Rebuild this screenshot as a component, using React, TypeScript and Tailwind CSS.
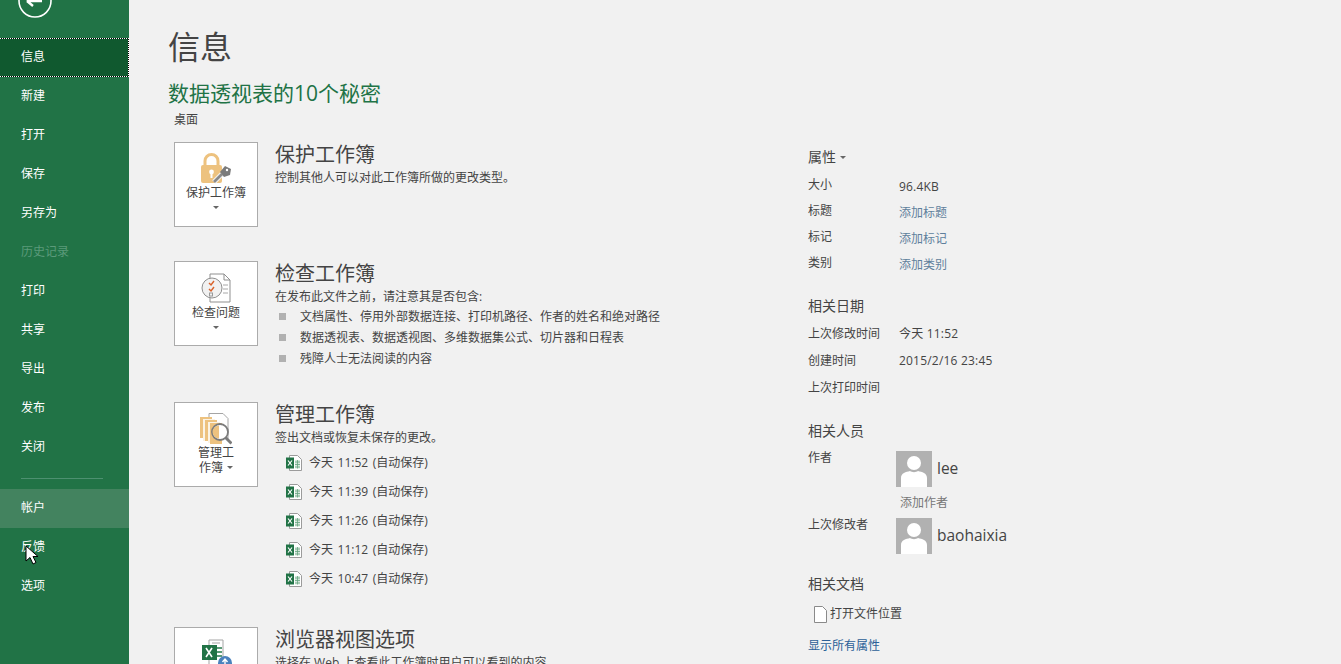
import React from "react";

const navTop = ["新建", "打开", "保存", "另存为", "历史记录", "打印", "共享", "导出", "发布", "关闭"];

const Caret = ({ className = "" }: { className?: string }) => (
  <svg width="6" height="3" viewBox="0 0 6 3" className={className}>
    <path d="M0 0h6L3 3z" fill="#666" />
  </svg>
);

const LockIcon = () => (
  <svg width="32" height="32" viewBox="0 0 32 32">
    <path d="M5 13V8a6.500 6.500 0 0 1 13 0V13" fill="none" stroke="#edc27f" strokeWidth="3" />
    <rect x="1" y="12" width="21" height="18" rx="2" fill="#edc27f" />
    <circle cx="11.500" cy="19" r="2.400" fill="#fff" />
    <rect x="10.500" y="20" width="2" height="5" fill="#fff" />
    <path d="M14 29l8-8" stroke="#f1f1f1" strokeWidth="5" />
    <path d="M14 29l8-8" stroke="#8a8a8a" strokeWidth="2.600" />
    <path d="M20 19l5-6 6 3-1 6-6 2z" fill="#7b7b7b" />
    <circle cx="27" cy="17" r="1.200" fill="#fff" />
  </svg>
);

const InspectIcon = () => (
  <svg width="32" height="30" viewBox="0 0 32 30">
    <path d="M10 1h14l6 6v22H10z" fill="#fff" stroke="#8f8f8f" />
    <path d="M24 1v6h6" fill="none" stroke="#8f8f8f" />
    <path d="M23 12h5M23 16h5M23 20h5" stroke="#a8a8a8" />
    <circle cx="12" cy="15" r="10" fill="#f1f1f1" stroke="#8f8f8f" />
    <path d="M9 10l2 2 3-4M9 16l2 2 3-4" fill="none" stroke="#d9622b" strokeWidth="1.400" />
    <rect x="9.500" y="20" width="3" height="3" fill="none" stroke="#999" />
  </svg>
);

const ManageIcon = () => (
  <svg width="32" height="32" viewBox="0 0 32 32">
    <path d="M9 .5h14l5 5v20H9z" fill="#fff" stroke="#a5a5a5" />
    <rect x="0" y="4" width="12" height="21" fill="#edc27f" />
    <rect x="3" y="6" width="12" height="22" fill="#fbf3e4" />
    <rect x="5" y="7" width="12" height="21" fill="#edc27f" />
    <rect x="8" y="9" width="12" height="21" fill="#fbf3e4" />
    <rect x="10" y="10" width="12" height="21" fill="#edc27f" />
    <circle cx="20" cy="19" r="8" fill="#fff" stroke="#7b7b7b" strokeWidth="1.800" />
    <path d="M19 12.500a6.500 6.500 0 0 0 0 13z" fill="#edc27f" />
    <path d="M25.500 24.500l6 6" stroke="#7b7b7b" strokeWidth="3" />
  </svg>
);

const BrowserIcon = () => (
  <svg width="34" height="32" viewBox="0 0 34 32">
    <path d="M10 2h14v27H10z" fill="#fff" stroke="#a5a5a5" />
    <path d="M13 5h8" stroke="#a5a5a5" />
    <rect x="3" y="7" width="15" height="15" fill="#217346" />
    <path d="M7 10l6 9M13 10l-6 9" stroke="#fff" strokeWidth="1.600" />
    <path d="M18 10h5M18 14h5M18 18h5" stroke="#5a9a76" strokeWidth="2" />
    <circle cx="26" cy="25" r="7" fill="#4a82bd" />
    <path d="M26 21v8M23.500 24l2.500-3 2.500 3" fill="none" stroke="#fff" strokeWidth="1.400" />
  </svg>
);

const ExcelFile = () => (
  <svg width="16" height="16" viewBox="0 0 16 16" className="shrink-0">
    <path d="M3.500 .5h8l4 4v11h-12z" fill="#fff" stroke="#9b9b9b" />
    <path d="M9 5h5v8.500H9z" fill="#d7e8dd" />
    <path d="M9 7h5M9 9.500h5M9 12h5M11.500 5v8.500" stroke="#67a582" strokeWidth=".8" />
    <rect x="0" y="2.500" width="8" height="11" fill="#217346" />
    <path d="M2 5.500l4 5M6 5.500l-4 5" stroke="#fff" strokeWidth="1.200" />
  </svg>
);

const Avatar = () => (
  <svg width="36" height="36" viewBox="0 0 36 36" className="shrink-0">
    <rect width="36" height="36" fill="#b1b1b1" />
    <circle cx="18" cy="12" r="7" fill="#fff" />
    <path d="M5 36V27c0-5 5-6 9-7 2 1.500 6 1.500 8 0 4 1 9 2 9 7v9z" fill="#fff" />
  </svg>
);

const BigButton = ({ icon, children }: { icon: React.ReactNode; children: React.ReactNode }) => (
  <div className="w-[84px] h-[85px] shrink-0 bg-white border border-[#ababab] flex flex-col items-center pt-[10px] text-[12px] leading-[15px] text-[#444]">
    <div className="h-[32px] flex items-center">{icon}</div>
    {children}
  </div>
);

const Prop = ({ label, value, link, nudge, h = "h-[26px]" }: { label: string; value?: string; link?: boolean; nudge?: boolean; h?: string }) => (
  <div className={`flex items-center text-[12px] ${h}`}>
    <span className="w-[91px] text-[#444]">{label}</span>
    {value && <span className={`${nudge ? "pt-[3px]" : ""} ${link ? "text-[#5f7f9c]" : "text-[#444] tracking-[0.2px]"}`}>{value}</span>}
  </div>
);

const App = () => {
  return (
    <div
      className="relative w-[1341px] h-[664px] overflow-hidden flex bg-[#f1f1f1] text-[#444]"
      style={{ fontFamily: '"Open Sans", "Noto Sans CJK SC", sans-serif' }}
    >
      {/* Sidebar */}
      <aside className="w-[129px] h-full shrink-0 bg-[#217346] text-white text-[12px]">
        <div className="h-[38px] relative overflow-hidden">
          <svg width="34" height="18" viewBox="0 0 34 18" className="absolute left-[18px] top-0">
            <circle cx="17" cy="1" r="16" fill="none" stroke="#fff" strokeWidth="1.600" />
            <path d="M9 1l6-5M9 1h15M9 1l6 5" fill="none" stroke="#fff" strokeWidth="2.400" />
          </svg>
        </div>
        <div className="h-[39px] bg-black border-y border-r border-dotted border-white">
          <div className="h-full bg-[#10592f] flex items-center pl-[21px] pb-[2px]">信息</div>
        </div>
        {navTop.map((item) => (
          <div
            key={item}
            className={`h-[39px] flex items-center pl-[21px] pb-[2px] ${item === "历史记录" ? "text-[#5b9a7a]" : ""}`}
          >
            {item}
          </div>
        ))}
        <div className="mx-[21px] mt-[11px] mb-[10px] h-px bg-[#4d9070] w-[82px]" />
        <div className="h-[39px] bg-[#43835f] flex items-center pl-[21px] pb-[2px]">帐户</div>
        <div className="h-[39px] flex items-center pl-[21px] pb-[2px]">反馈</div>
        <div className="h-[39px] flex items-center pl-[21px] pb-[2px]">选项</div>
      </aside>

      {/* Main */}
      <main className="flex-1 pl-[40px] min-w-0">
        <h1 className="text-[32px] leading-[44px] mt-[25px] -ml-[1px] text-[#444]">信息</h1>
        <h2 className="text-[21px] leading-[30px] mt-[9px] -ml-[1px] text-[#217346]">数据透视表的10个秘密</h2>
        <p className="text-[12px] leading-[16px] ml-[5px] mt-[4px] text-[#444]">桌面</p>

        <div className="flex mt-[14px]">
          <div className="w-[639px] shrink-0 pl-[5px]">
            {/* protect */}
            <section className="flex h-[119px]">
              <BigButton icon={<LockIcon />}>
                <span>保护工作簿</span>
                <Caret className="mt-[6px]" />
              </BigButton>
              <div className="pl-[17px]">
                <h3 className="text-[20px] leading-[26px] text-[#444]">保护工作簿</h3>
                <p className="text-[12px] leading-[16px] mt-[2px]">控制其他人可以对此工作簿所做的更改类型。</p>
              </div>
            </section>

            {/* inspect */}
            <section className="flex h-[141px]">
              <BigButton icon={<InspectIcon />}>
                <span className="mt-[1px]">检查问题</span>
                <Caret className="mt-[6px]" />
              </BigButton>
              <div className="pl-[17px]">
                <h3 className="text-[20px] leading-[26px] text-[#444]">检查工作簿</h3>
                <p className="text-[12px] leading-[16px] mt-[2px]">在发布此文件之前，请注意其是否包含:</p>
                <ul className="text-[12px] mt-[1px]">
                  {["文档属性、停用外部数据连接、打印机路径、作者的姓名和绝对路径", "数据透视表、数据透视图、多维数据集公式、切片器和日程表", "残障人士无法阅读的内容"].map((t) => (
                    <li key={t} className="flex items-center h-[21px] pl-[4px]">
                      <span className="w-[7px] h-[7px] bg-[#b1b1b1] mr-[14px]" />
                      {t}
                    </li>
                  ))}
                </ul>
              </div>
            </section>

            {/* manage */}
            <section className="flex h-[225px]">
              <BigButton icon={<ManageIcon />}>
                <span>管理工</span>
                <span className="flex items-center gap-[4px]">作簿<Caret /></span>
              </BigButton>
              <div className="pl-[17px]">
                <h3 className="text-[20px] leading-[26px] text-[#444]">管理工作簿</h3>
                <p className="text-[12px] leading-[16px] mt-[2px]">签出文档或恢复未保存的更改。</p>
                <div className="mt-[2px]">
                  {["今天 11:52 (自动保存)", "今天 11:39 (自动保存)", "今天 11:26 (自动保存)", "今天 11:12 (自动保存)", "今天 10:47 (自动保存)"].map((t) => (
                    <div key={t} className="flex items-center h-[29px] pl-[11px] gap-[7px] text-[12px] [word-spacing:1.5px]">
                      <ExcelFile />
                      {t}
                    </div>
                  ))}
                </div>
              </div>
            </section>

            {/* browser view */}
            <section className="flex">
              <BigButton icon={<BrowserIcon />}>
                <span />
              </BigButton>
              <div className="pl-[17px]">
                <h3 className="text-[20px] leading-[26px] text-[#444]">浏览器视图选项</h3>
                <p className="text-[12px] leading-[16px] mt-[2px]">选择在 Web 上查看此工作簿时用户可以看到的内容。</p>
              </div>
            </section>
          </div>

          {/* Properties */}
          <div className="w-[300px] shrink-0">
            <div className="flex items-center gap-[4px] text-[14px] leading-[20px] mt-[5px] mb-[5px] text-[#444]">属性<Caret /></div>
            <Prop label="大小" value="96.4KB" nudge />
            <Prop label="标题" value="添加标题" link nudge />
            <Prop label="标记" value="添加标记" link nudge />
            <Prop label="类别" value="添加类别" link nudge />

            <div className="text-[14px] leading-[20px] mt-[20px] mb-[4px]">相关日期</div>
            <Prop label="上次修改时间" value="今天 11:52" h="h-[27px]" />
            <Prop label="创建时间" value="2015/2/16 23:45" h="h-[27px]" />
            <Prop label="上次打印时间" h="h-[27px]" />

            <div className="text-[14px] leading-[20px] mt-[20px]">相关人员</div>
            <div className="flex mt-[10px] text-[12px]">
              <span className="w-[88px] leading-[14px]">作者</span>
              <Avatar />
              <span className="text-[15.5px] leading-[34px] ml-[5px]">lee</span>
            </div>
            <div className="text-[12px] leading-[16px] ml-[92px] mt-[8px] text-[#777]">添加作者</div>
            <div className="flex mt-[7px] text-[12px]">
              <span className="w-[88px] leading-[14px]">上次修改者</span>
              <Avatar />
              <span className="text-[15.5px] leading-[34px] ml-[5px]">baohaixia</span>
            </div>

            <div className="text-[14px] leading-[20px] mt-[20px]">相关文档</div>
            <div className="flex items-center gap-[3px] pl-[6px] mt-[11px] text-[12px] h-[18px]">
              <svg width="13" height="17" viewBox="0 0 13 17">
                <path d="M.5.5h8l4 4v12H.5z" fill="#fff" stroke="#8a8a8a" />
              </svg>
              打开文件位置
            </div>
            <div className="text-[12px] leading-[16px] mt-[15px] text-[#2b5f97]">显示所有属性</div>
          </div>
        </div>
      </main>

      {/* mouse pointer */}
      <svg width="14" height="20" viewBox="0 0 14 20" className="absolute left-[25px] top-[545px]">
        <path d="M1 1v15l4-3.500 3 6.500 3-1.500-3-6h5z" fill="#fff" stroke="#000" />
      </svg>
    </div>
  );
};

export default App;
